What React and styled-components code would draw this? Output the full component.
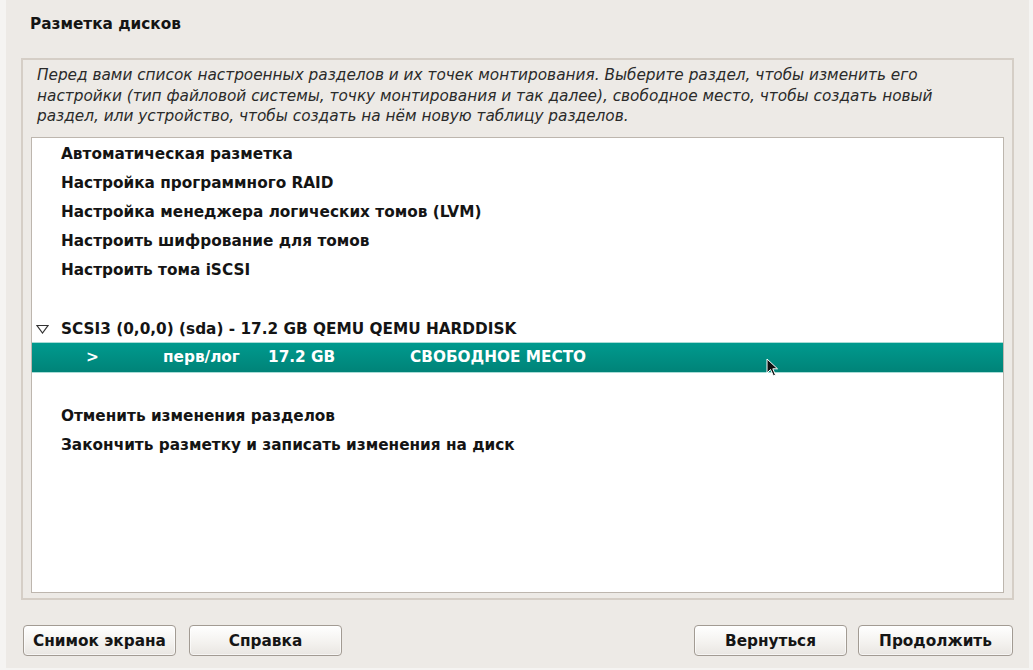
import React from "react";
import styled, { createGlobalStyle } from "styled-components";

const GlobalStyle = createGlobalStyle`
  html, body {
    margin: 0;
    padding: 0;
    background: #f5f4f2;
  }
  body {
    font-family: "DejaVu Sans", "Liberation Sans", sans-serif;
    color: #1b1b1b;
  }
`;

const Screen = styled.div`
  width: 1033px;
  height: 670px;
  display: flex;
  padding-left: 6px;
  box-sizing: border-box;
`;

const Panel = styled.div`
  width: 1023px;
  height: 668px;
  background: #edeae6;
  display: flex;
  flex-direction: column;
  box-sizing: border-box;
  padding: 14px 15px 12px 15px;
`;

const Title = styled.h1`
  margin: 0 0 24px 9px;
  font-size: 15.3px;
  line-height: 20px;
  font-weight: bold;
  color: #141414;
`;

const Frame = styled.div`
  flex: 1;
  border: 2px solid #d5cec6;
  display: flex;
  flex-direction: column;
  padding: 5px 8px 5px 8px;
  min-height: 0;
`;

const Description = styled.p`
  margin: 0 0 10px 6px;
  font-size: 15.3px;
  line-height: 20.5px;
  font-style: italic;
  color: #2a2a2a;
  white-space: nowrap;
`;

const List = styled.div`
  position: relative;
  flex: 1;
  background: #fff;
  border: 1px solid #bdb6ae;
  padding-top: 2px;
`;

const Row = styled.div`
  height: 29.1px;
  display: flex;
  align-items: center;
  font-size: 15.3px;
  font-weight: bold;
  color: #141414;
  box-sizing: border-box;
  white-space: nowrap;
  ${(p) =>
    p.$selected &&
    `
    height: 31.1px;
    margin: -1.5px 0 -0.5px 0;
    color: #fff;
    background: linear-gradient(#009a8e, #008378);
    border-top: 1px solid #a9dcd6;
    border-bottom: 1px solid #a9dcd6;
  `}
`;

const Lead = styled.span`
  width: 29px;
  flex-shrink: 0;
  box-sizing: border-box;
  padding-left: 4px;
  display: flex;
  align-items: center;
`;

const Cell = styled.span`
  width: ${(p) => p.$w}px;
  flex-shrink: 0;
  white-space: pre;
`;

const Cursor = styled.svg`
  position: absolute;
  left: 734px;
  top: 220px;
`;

const ButtonBar = styled.div`
  display: flex;
  align-items: center;
  margin-top: 25px;
  padding: 0 1px 0 2px;
`;

const ButtonGroup = styled.div`
  display: flex;
  gap: ${(p) => p.$gap}px;
`;

const Spacer = styled.div`
  flex: 1;
`;

const Button = styled.button`
  width: ${(p) => p.$w || 153}px;
  height: 31px;
  border: 1px solid #a29b93;
  border-radius: 4px;
  background: linear-gradient(#ffffff, #f3f1ee 60%, #e9e6e2);
  font-family: "DejaVu Sans", "Liberation Sans", sans-serif;
  font-size: 15.3px;
  font-weight: bold;
  color: #151515;
  padding: 0;
  box-shadow: inset 0 0 0 1px rgba(255, 255, 255, 0.6);
`;

const items = [
  "Автоматическая разметка",
  "Настройка программного RAID",
  "Настройка менеджера логических томов (LVM)",
  "Настроить шифрование для томов",
  "Настроить тома iSCSI",
];

export default function App() {
  return (
    <>
      <GlobalStyle />
      <Screen>
        <Panel>
          <Title>Разметка дисков</Title>
          <Frame>
            <Description>
              Перед вами список настроенных разделов и их точек монтирования. Выберите раздел, чтобы изменить его
              <br />
              настройки (тип файловой системы, точку монтирования и так далее), свободное место, чтобы создать новый
              <br />
              раздел, или устройство, чтобы создать на нём новую таблицу разделов.
            </Description>
            <List>
              {items.map((t) => (
                <Row key={t}>
                  <Lead />
                  {t}
                </Row>
              ))}
              <Row />
              <Row>
                <Lead>
                  <svg width="13" height="10" viewBox="0 0 13 10">
                    <path d="M1 1.5 L12 1.5 L6.5 9 Z" fill="none" stroke="#333" strokeWidth="1.2" />
                  </svg>
                </Lead>
                SCSI3 (0,0,0) (sda) - 17.2 GB QEMU QEMU HARDDISK
              </Row>
              <Row $selected>
                <Lead />
                <Cell $w={25} />
                <Cell $w={77}>&gt;</Cell>
                <Cell $w={105}>перв/лог</Cell>
                <Cell $w={142}>17.2 GB</Cell>
                <Cell $w={200}>СВОБОДНОЕ МЕСТО</Cell>
              </Row>
              <Row />
              <Row>
                <Lead />
                Отменить изменения разделов
              </Row>
              <Row>
                <Lead />
                Закончить разметку и записать изменения на диск
              </Row>
              <Cursor width="14" height="20" viewBox="0 0 14 20">
                <path d="M1 1 L1 15 L4.5 11.5 L7.5 18 L9.5 17 L6.8 10.8 L11.5 10.8 Z" fill="#111" stroke="#fff" strokeWidth="1" />
              </Cursor>
            </List>
          </Frame>
          <ButtonBar>
            <ButtonGroup $gap={13}>
              <Button>Снимок экрана</Button>
              <Button>Справка</Button>
            </ButtonGroup>
            <Spacer />
            <ButtonGroup $gap={11}>
              <Button>Вернуться</Button>
              <Button $w={155}>Продолжить</Button>
            </ButtonGroup>
          </ButtonBar>
        </Panel>
      </Screen>
    </>
  );
}
